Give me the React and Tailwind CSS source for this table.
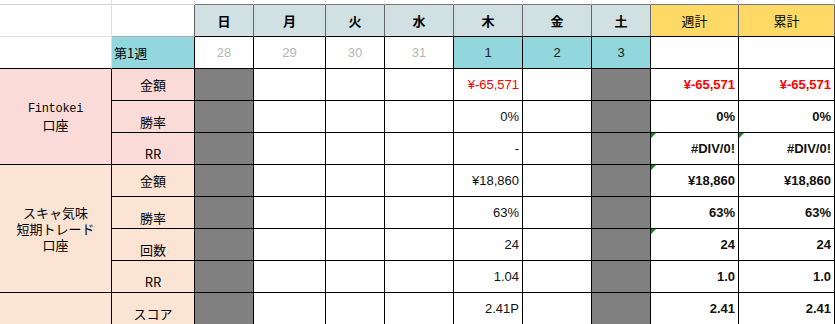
import React from 'react'

const DAYS = ['日', '月', '火', '水', '木', '金', '土']
const DATES = [
  { n: 28, muted: true },
  { n: 29, muted: true },
  { n: 30, muted: true },
  { n: 31, muted: true },
  { n: 1 },
  { n: 2 },
  { n: 3 },
]

// 週ごとの実績行。first = セクション先頭行（ラベルは縦中央、それ以外は下寄せ）
const ROWS = [
  { label: '金額', first: true, thu: '¥-65,571', week: '¥-65,571', total: '¥-65,571', red: true },
  { label: '勝率', thu: '0%', week: '0%', total: '0%' },
  { label: 'RR', thu: '-', week: '#DIV/0!', total: '#DIV/0!', markWeek: true, markTotal: true },
  { label: '金額', first: true, thu: '¥18,860', week: '¥18,860', total: '¥18,860', markWeek: true },
  { label: '勝率', thu: '63%', week: '63%', total: '63%' },
  { label: '回数', thu: '24', week: '24', total: '24', markWeek: true },
  { label: 'RR', thu: '1.04', week: '1.0', total: '1.0' },
  { label: 'スコア', thu: '2.41P', week: '2.41', total: '2.41' },
]

const JP = "font-['Noto_Sans_CJK_JP',sans-serif]"
const NUM = "font-['Liberation_Sans',Arial,sans-serif]"

function Mark() {
  return (
    <span className="absolute left-0 top-0 w-0 h-0 border-t-[5px] border-r-[5px] border-t-[#118a11] border-r-transparent" />
  )
}

function ValueCell({ value, bold, red, mark }) {
  return (
    <div
      className={`relative flex items-center justify-end pr-[3px] bg-white border-r border-b border-black text-[13px] ${NUM} ${
        bold ? 'font-bold' : ''
      } ${red ? 'text-[#ff0000]' : 'text-[#111]'}`}
    >
      {mark && <Mark />}
      {value}
    </div>
  )
}

function BodyRow({ row, bg, lead }) {
  return (
    <>
      {lead}
      <div
        className={`flex justify-center border-r border-b border-black text-[13px] ${JP} ${bg} ${
          row.first ? 'items-center' : 'items-end pb-[1px]'
        }`}
      >
        {row.label}
      </div>
      <div className="bg-[#808080] border-r border-b border-black" />
      <div className="bg-white border-r border-b border-black" />
      <div className="bg-white border-r border-b border-black" />
      <div className="bg-white border-r border-b border-black" />
      <ValueCell value={row.thu} red={row.red} />
      <div className="bg-white border-r border-b border-black" />
      <div className="bg-[#808080] border-r border-b border-black" />
      <ValueCell value={row.week} bold red={row.red} mark={row.markWeek} />
      <ValueCell value={row.total} bold red={row.red} mark={row.markTotal} />
    </>
  )
}

export default function App() {
  return (
    <div className="w-[835px] h-[324px] overflow-hidden bg-white text-black">
      <div className="grid grid-cols-[112px_83px_59px_72px_59px_69px_69px_69px_59px_88px_96px] grid-rows-[5px_repeat(10,32px)]">
        {/* 上端の切れた行 */}
        {Array.from({ length: 11 }).map((_, i) => (
          <div
            key={`top-${i}`}
            className={`bg-white border-r border-[#e2e2e2] border-b ${i < 2 ? 'border-b-[#d4d4d4]' : 'border-b-[#777]'}`}
          />
        ))}

        {/* 曜日ヘッダー */}
        <div className="bg-white border-r border-b border-[#e2e2e2]" />
        <div className="bg-white border-r border-r-[#5f5f5f] border-b border-b-[#a8a8a8]" />
        {DAYS.map((d) => (
          <div
            key={d}
            className={`flex items-center justify-center bg-[#d0e0e3] border-r border-r-[#666] border-b border-b-black text-[13px] font-bold ${JP}`}
          >
            {d}
          </div>
        ))}
        {['週計', '累計'].map((d) => (
          <div
            key={d}
            className={`flex items-center justify-center bg-[#ffd966] border-r border-r-[#666] border-b border-b-black text-[13px] ${JP}`}
          >
            {d}
          </div>
        ))}

        {/* 日付行 */}
        <div className="bg-white border-r border-r-[#e2e2e2] border-b border-b-black" />
        <div className={`flex items-center pl-[2px] bg-[#92d7de] border-r border-b border-black text-[13px] ${JP}`}>
          第1週
        </div>
        {DATES.map((d) => (
          <div
            key={d.n}
            className={`flex items-center justify-center border-r border-b border-black text-[13px] ${NUM} ${
              d.muted ? 'bg-white text-[#b5b5b5]' : 'bg-[#92d7de] text-[#1b1b1b]'
            }`}
          >
            {d.n}
          </div>
        ))}
        <div className="bg-white border-r border-b border-black" />
        <div className="bg-white border-r border-b border-black" />

        {/* Fintokei 口座 */}
        {ROWS.slice(0, 3).map((row, i) => (
          <BodyRow
            key={`f-${i}`}
            row={row}
            bg="bg-[#fadbd8]"
            lead={
              i === 0 && (
                <div
                  className={`row-span-3 flex flex-col items-center justify-center leading-[16px] bg-[#fadbd8] border-r border-b border-black text-[13px] ${JP}`}
                >
                  <span className="font-['Liberation_Mono',monospace] text-[12px] tracking-[-0.3px]">Fintokei</span>
                  <span>口座</span>
                </div>
              )
            }
          />
        ))}

        {/* スキャ気味 短期トレード 口座 */}
        {ROWS.slice(3, 7).map((row, i) => (
          <BodyRow
            key={`s-${i}`}
            row={row}
            bg="bg-[#fce4d5]"
            lead={
              i === 0 && (
                <div
                  className={`row-span-4 flex flex-col items-center justify-center leading-[16px] bg-[#fce4d5] border-r border-b border-black text-[13px] ${JP}`}
                >
                  <span>スキャ気味</span>
                  <span>短期トレード</span>
                  <span>口座</span>
                </div>
              )
            }
          />
        ))}

        {/* スコア */}
        <BodyRow
          row={ROWS[7]}
          bg="bg-[#fce4d5]"
          lead={<div className="bg-[#fce4d5] border-r border-b border-black" />}
        />
      </div>
    </div>
  )
}
